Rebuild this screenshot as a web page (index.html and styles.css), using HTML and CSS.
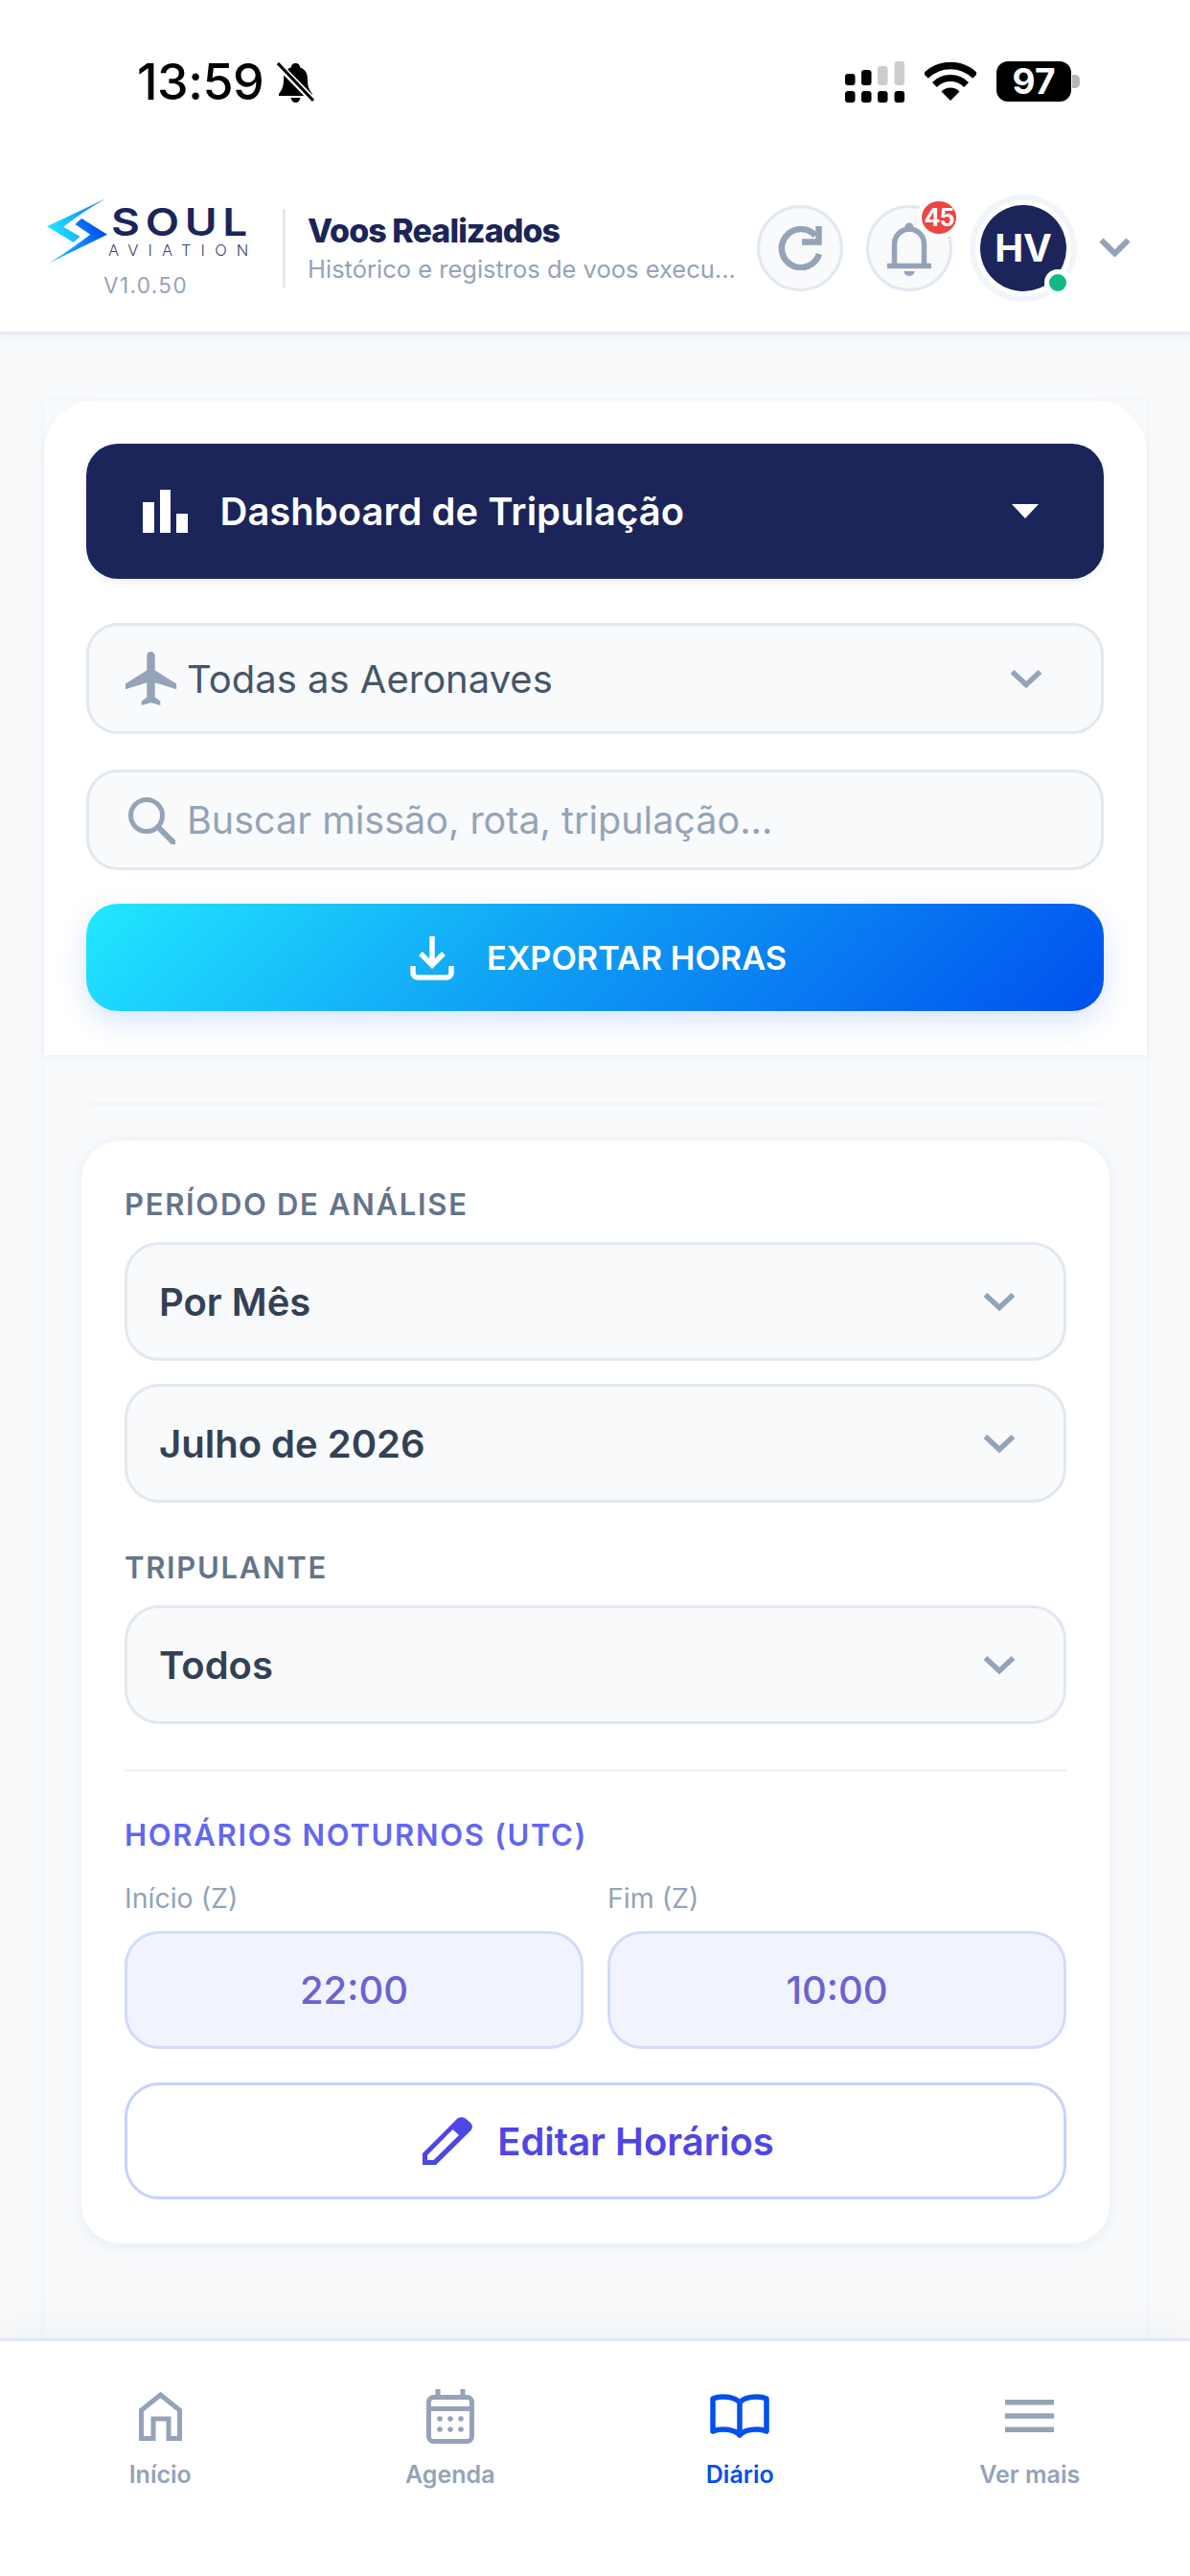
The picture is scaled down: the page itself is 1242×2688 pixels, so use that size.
FILE: index.html
```html
<!DOCTYPE html>
<html lang="pt-BR">
<head>
<meta charset="utf-8">
<title>Voos Realizados</title>
<link rel="stylesheet" href="styles.css">
</head>
<body>
<div class="page">
  <header class="header">
    <div class="status">
      <div class="status-left">
        <span class="time">13:59</span>
        <svg class="mute" viewBox="0 0 39 42"><path d="M19.5 1c3 0 4.500 2 4.800 4.500C30 7.500 32 12 32 18c0 8 2 11 5 15v2H2v-2c3-4 5-7 5-15 0-6 2-10.500 7.700-12.500C15 3 16.500 1 19.500 1zM14.500 37h10c-.5 3-2.500 5-5 5s-4.500-2-5-5z" fill="#000"/><path d="M1 2l37 38" stroke="#fff" stroke-width="7"/><path d="M1 1l37 39" stroke="#000" stroke-width="3"/></svg>
      </div>
      <div class="status-right">
        <svg class="signal" viewBox="0 0 62 43"><g fill="#000"><rect x="0" y="13" width="10.500" height="12" rx="3"/><rect x="17" y="9" width="10.500" height="16" rx="3"/><rect x="0" y="31" width="10.500" height="12" rx="3"/><rect x="17" y="31" width="10.500" height="12" rx="3"/><rect x="34" y="31" width="10.500" height="12" rx="3"/><rect x="51.500" y="31" width="10.500" height="12" rx="3"/></g><g fill="#ccc"><rect x="34" y="5" width="10.500" height="20" rx="3"/><rect x="51.500" y="0" width="10.500" height="25" rx="3"/></g></svg>
        <svg class="wifi" viewBox="0 0 54 40"><path d="M1.200 14.200a36.500 36.500 0 0 1 51.600 0" fill="none" stroke="#000" stroke-width="7.500"/><path d="M10.400 23.400a23.500 23.500 0 0 1 33.200 0" fill="none" stroke="#000" stroke-width="7"/><path d="M27 40L17.500 30.500a13.500 13.500 0 0 1 19 0z" fill="#000"/></svg>
        <div class="battery"><span class="battery-body">97</span><span class="battery-nub"></span></div>
      </div>
    </div>
    <div class="topbar">
      <div class="brand">
        <div class="logo">
          <svg class="logo-mark" viewBox="57 60 188 202">
            <defs>
              <linearGradient id="lg1" x1="0" y1="0.6" x2="1" y2="0.3"><stop offset="0" stop-color="#1fe6ff"/><stop offset="1" stop-color="#1478f0"/></linearGradient>
              <linearGradient id="lg2" x1="0" y1="1" x2="1" y2="0.4"><stop offset="0" stop-color="#1fd8ff"/><stop offset="1" stop-color="#0050ee"/></linearGradient>
            </defs>
            <path d="M240 60L57 147l83 50 20-19-52-30q62-48 132-88z" fill="url(#lg1)"/>
            <path d="M245 172l-80-50-20 18 47 32q-62 48-130 90z" fill="url(#lg2)"/>
          </svg>
          <div class="logo-text">
            <span class="logo-soul">SOUL</span>
            <span class="logo-aviation">AVIATION</span>
          </div>
        </div>
        <span class="version">V1.0.50</span>
      </div>
      <div class="title-block">
        <h1 class="title">Voos Realizados</h1>
        <p class="subtitle">Histórico e registros de voos execu...</p>
      </div>
      <div class="actions">
        <button class="round">
          <svg class="ic-refresh" viewBox="0 0 46 46"><path d="M43 29A20 20 0 1 1 39 10" fill="none" stroke="#94a3b8" stroke-width="6.500"/><path d="M25 16.500H42.500V0" fill="none" stroke="#94a3b8" stroke-width="6.500"/></svg>
        </button>
        <button class="round bell">
          <svg class="ic-bell" viewBox="0 0 46 56"><circle cx="23" cy="5" r="4.500" fill="#94a3b8"/><path d="M7.500 46V23a15.500 16 0 0 1 31 0V46" fill="none" stroke="#94a3b8" stroke-width="5.500"/><path d="M0 45.500H46" stroke="#94a3b8" stroke-width="5.500"/><path d="M17.500 51h11a5.500 5 0 0 1-11 0z" fill="#94a3b8"/></svg>
          <span class="badge">45</span>
        </button>
        <div class="avatar">HV<span class="online"></span></div>
        <svg class="ic-caret" viewBox="0 0 33 20"><path d="M2.500 2.500L16.500 16.500 30.500 2.500" fill="none" stroke="#94a3b8" stroke-width="6"/></svg>
      </div>
    </div>
  </header>

  <main class="main">
    <div class="panel">
      <section class="filters">
        <button class="dash">
          <span class="dash-bars"><i class="bar bar-a"></i><i class="bar bar-b"></i><i class="bar bar-c"></i></span>
          <span class="dash-label">Dashboard de Tripulação</span>
          <svg class="dash-arrow" viewBox="0 0 28 15"><path d="M0 0H28L14 15z" fill="#fff"/></svg>
        </button>
        <div class="control aircraft">
          <svg class="ic-plane" viewBox="2 2 19 20"><path d="M21 16v-2l-8-5V3.500c0-.83-.67-1.500-1.500-1.500S10 2.670 10 3.500V9l-8 5v2l8-2.500V19l-2 1.500V22l3.500-1 3.500 1v-1.500L13 19v-5.500l8 2.500z" fill="#94a3b8"/></svg>
          <span class="control-text">Todas as Aeronaves</span>
          <svg class="chev" viewBox="0 0 34 21"><path d="M2.500 3L17 16.500 31.500 3" fill="none" stroke="#94a3b8" stroke-width="5.500"/></svg>
        </div>
        <div class="control search">
          <svg class="ic-search" viewBox="0 0 50 50"><circle cx="20" cy="20" r="16.500" fill="none" stroke="#94a3b8" stroke-width="5"/><path d="M32 32L48 48" stroke="#94a3b8" stroke-width="6" stroke-linecap="round"/></svg>
          <span class="placeholder">Buscar missão, rota, tripulação...</span>
        </div>
        <button class="export">
          <svg class="ic-download" viewBox="0 0 46 48"><path d="M23 2V31M11 20L23 32 35 20" fill="none" stroke="#fff" stroke-width="5.500"/><path d="M3 33V40a5 5 0 0 0 5 5H38a5 5 0 0 0 5-5V33" fill="none" stroke="#fff" stroke-width="5.500"/></svg>
          <span>EXPORTAR HORAS</span>
        </button>
      </section>

      <div class="rule"></div>

      <section class="card">
        <div class="label">PERÍODO DE ANÁLISE</div>
        <div class="select"><span>Por Mês</span><svg class="chev" viewBox="0 0 34 21"><path d="M2.500 3L17 16.500 31.500 3" fill="none" stroke="#94a3b8" stroke-width="5.500"/></svg></div>
        <div class="select next"><span>Julho de 2026</span><svg class="chev" viewBox="0 0 34 21"><path d="M2.500 3L17 16.500 31.500 3" fill="none" stroke="#94a3b8" stroke-width="5.500"/></svg></div>
        <div class="label spaced">TRIPULANTE</div>
        <div class="select"><span>Todos</span><svg class="chev" viewBox="0 0 34 21"><path d="M2.500 3L17 16.500 31.500 3" fill="none" stroke="#94a3b8" stroke-width="5.500"/></svg></div>
        <div class="card-rule"></div>
        <div class="label night">HORÁRIOS NOTURNOS (UTC)</div>
        <div class="times">
          <div class="time-field"><div class="time-label">Início (Z)</div><div class="time-box">22:00</div></div>
          <div class="time-field"><div class="time-label">Fim (Z)</div><div class="time-box">10:00</div></div>
        </div>
        <button class="edit">
          <svg class="ic-pencil" viewBox="0 0 52 50"><path fill-rule="evenodd" d="M0 50V38L36 2c2-2 5-2.500 8-1l6 5c2.500 2.500 2.500 6 0 8.500L14 50zM5 45h6.500L38 19l-6.500-6L5 40z" fill="#4f46e5"/></svg>
          <span>Editar Horários</span>
        </button>
      </section>
    </div>
  </main>

  <nav class="nav">
    <a class="nav-item">
      <svg class="nv-home" viewBox="0 0 45 51"><path d="M2.500 51V19L22.500 3 42.500 19V48.500H31V28H15V48.500H2.500" fill="none" stroke="#94a3b8" stroke-width="5"/></svg>
      <span>Início</span>
    </a>
    <a class="nav-item">
      <svg class="nv-cal" viewBox="0 0 50 57"><path d="M12 0V9M38 0V9" stroke="#94a3b8" stroke-width="5"/><rect x="2.500" y="8.500" width="45" height="46" rx="5" fill="none" stroke="#94a3b8" stroke-width="5"/><path d="M2 20.500H48" stroke="#94a3b8" stroke-width="5"/><g fill="#94a3b8"><circle cx="14" cy="31" r="2.800"/><circle cx="25" cy="31" r="2.800"/><circle cx="36" cy="31" r="2.800"/><circle cx="14" cy="42" r="2.800"/><circle cx="25" cy="42" r="2.800"/><circle cx="36" cy="42" r="2.800"/></g></svg>
      <span>Agenda</span>
    </a>
    <a class="nav-item active">
      <svg class="nv-book" viewBox="0 0 62 46"><path d="M31 9C27 4 20 3 13 3 9 3 6 3.500 3 5V39C6 37.500 9 37 13 37 20 37 27 38 31 43 35 38 42 37 49 37 53 37 56 37.500 59 39V5C56 3.500 53 3 49 3 42 3 35 4 31 9zM31 9V43" fill="none" stroke="#0050ee" stroke-width="5.500" stroke-linejoin="round"/></svg>
      <span>Diário</span>
    </a>
    <a class="nav-item">
      <svg class="nv-menu" viewBox="0 0 51 34"><path d="M0 2.750H51M0 17H51M0 31.250H51" stroke="#94a3b8" stroke-width="5.500"/></svg>
      <span>Ver mais</span>
    </a>
  </nav>
</div>
</body>
</html>
```
FILE: styles.css
```css
* { box-sizing: border-box; }
html, body { margin: 0; padding: 0; }
body { font-family: Inter, "Liberation Sans", sans-serif; background: #f8fafc; color: #334155; }
button { font: inherit; border: 0; padding: 0; }
h1, p { margin: 0; }
svg { display: block; flex: none; }

.page { width: 1242px; height: 2688px; display: flex; flex-direction: column; overflow: hidden; }

/* header */
.header { height: 349px; flex: none; background: #fff; border-bottom: 3px solid #e6ebf2; box-shadow: 0 3px 10px rgba(148,163,184,.1); position: relative; z-index: 2; }
.status { height: 202px; display: flex; justify-content: space-between; padding: 64px 115px 0 143px; }
.status-left { display: flex; align-items: flex-start; gap: 14px; }
.time { font-size: 52px; font-weight: 500; line-height: 44px; color: #000; letter-spacing: -0.5px; }
.mute { width: 39px; height: 42px; margin-top: 1px; }
.status-right { display: flex; align-items: flex-start; gap: 21px; }
.signal { width: 62px; height: 43px; }
.wifi { width: 54px; height: 40px; margin-top: 1px; }
.battery { display: flex; align-items: center; gap: 1px; }
.battery-body { width: 78px; height: 42px; border-radius: 12px; background: #000; color: #fff; font-size: 37px; font-weight: 700; line-height: 42px; text-align: center; }
.battery-nub { width: 8px; height: 14px; background: #b5b5b5; border-radius: 0 5px 5px 0; }

.topbar { display: flex; align-items: center; height: 113px; padding: 0 63px 0 49px; }
.brand { width: 206px; display: flex; flex-direction: column; align-items: center; gap: 11px; flex: none; }
.logo { display: flex; gap: 4px; align-items: center; width: 206px; }
.logo-mark { width: 63px; height: 68px; }
.logo-text { display: flex; flex-direction: column; align-items: flex-start; color: #1b2559; margin-top: 2px; width: 139px; white-space: nowrap; }
.logo-soul { font-size: 40px; font-weight: 600; letter-spacing: 5px; line-height: 38px; transform: scaleX(1.15); transform-origin: left center; }
.logo-aviation { font-size: 16.500px; font-weight: 300; letter-spacing: 10.200px; line-height: 20px; margin-left: -3px; color: #3c4670; }
.version { font-size: 22.500px; color: #94a3b8; font-weight: 400; letter-spacing: 1.400px; line-height: 24px; }
.title-block { width: 473px; flex: none; margin-left: 40px; padding-left: 23px; border-left: 3px solid #e2e8f0; height: 82px; display: flex; flex-direction: column; justify-content: center; gap: 4px; }
.title { font-size: 34px; font-weight: 800; color: #1b2559; letter-spacing: -0.93px; line-height: 40px; }
.subtitle { font-size: 25.500px; color: #94a3b8; line-height: 32px; white-space: nowrap; }
.actions { display: flex; align-items: center; margin-left: 22px; }
.round { width: 90px; height: 90px; border-radius: 50%; background: #f8fafc; border: 3px solid #e2e8f0; display: flex; align-items: center; justify-content: center; position: relative; }
.bell { margin-left: 24px; }
.ic-refresh { width: 46px; height: 46px; }
.ic-bell { width: 46px; height: 56px; margin-top: 2px; }
.badge { position: absolute; top: -7px; right: -7px; width: 36px; height: 34px; border-radius: 50%; background: #ef4444; color: #fff; font-size: 25px; font-weight: 700; line-height: 34px; text-align: center; letter-spacing: -1px; box-shadow: 0 0 0 5px #fff; }
.avatar { position: relative; width: 90px; height: 90px; margin-left: 29px; border-radius: 50%; background: #1b2559; color: #fff; font-size: 40px; font-weight: 700; line-height: 90px; text-align: center; box-shadow: 0 0 0 5px #fff, 0 0 0 11px #f1f5f9; }
.online { position: absolute; right: 0; bottom: 0; width: 18px; height: 18px; border-radius: 50%; background: #10b981; box-shadow: 0 0 0 5px #fff; }
.ic-caret { width: 33px; height: 20px; margin-left: 34px; margin-top: -2px; }

/* main */
.main { flex: 1; min-height: 0; padding: 69px 45px 0 46px; overflow: hidden; }
.panel { height: 100%; box-shadow: 0 0 6px rgba(148,163,184,.1); }

.filters { background: #fff; border-radius: 54px 54px 0 0; padding: 45px 45px 46px 44px; display: flex; flex-direction: column; box-shadow: 0 3px 6px rgba(148,163,184,.1); }
.dash { height: 141px; border-radius: 33px; background: #1b2559; color: #fff; display: flex; align-items: center; padding: 0 68px 0 59px; box-shadow: 0 3px 8px rgba(27,37,89,.08); }
.dash-bars { display: flex; align-items: flex-end; gap: 6px; height: 45px; }
.bar { width: 11.500px; background: #fff; display: block; }
.bar-a { height: 32px; }
.bar-b { height: 45px; }
.bar-c { height: 20px; }
.dash-label { flex: 1; margin-left: 34px; text-align: left; font-size: 40px; font-weight: 600; }
.dash-arrow { width: 28px; height: 15px; }

.control { display: flex; align-items: center; background: #f8fafc; border: 3px solid #e2e8f0; border-radius: 33px; }
.aircraft { height: 116px; margin-top: 46px; padding: 0 61px 0 36px; }
.ic-plane { width: 57px; height: 56px; }
.control-text { flex: 1; margin-left: 9px; font-size: 40px; color: #475569; }
.chev { width: 34px; height: 21px; }
.search { height: 105px; margin-top: 37px; padding: 0 0 0 40px; }
.ic-search { width: 50px; height: 50px; }
.placeholder { margin-left: 12px; font-size: 39.500px; color: #94a3b8; }
.export { height: 112px; margin-top: 35px; padding-left: 7px; border-radius: 33px; background: linear-gradient(135deg, #22e8ff 0%, #0fa0f5 45%, #0050ee 100%); color: #fff; display: flex; align-items: center; justify-content: center; gap: 34px; font-size: 34.300px; font-weight: 600; box-shadow: 0 10px 30px rgba(0,80,238,.16); }
.ic-download { width: 46px; height: 48px; }

.rule { height: 2px; margin: 50px 47px 0; background: #f1f5f9; }

.card { margin: 36px 38px 0; background: #fff; border-radius: 42px; padding: 49px 45px 46px; box-shadow: 0 3px 14px rgba(148,163,184,.14); border: 1px solid #f1f5f9; }
.label { font-size: 31px; font-weight: 600; color: #64748b; letter-spacing: 1.700px; line-height: 36px; }
.spaced { margin-top: 50px; }
.select { height: 124px; margin-top: 21px; display: flex; align-items: center; justify-content: space-between; padding: 0 50px 0 33px; background: #f8fafc; border: 3px solid #e2e8f0; border-radius: 36px; font-size: 40px; font-weight: 600; color: #334155; }
.select.next { margin-top: 24px; }
.card-rule { height: 3px; margin-top: 47px; background: #f1f5f9; }
.night { color: #6366f1; margin-top: 48px; }
.times { display: grid; grid-template-columns: 1fr 1fr; gap: 25px; margin-top: 32px; }
.time-label { font-size: 28.500px; line-height: 32px; color: #94a3b8; margin-bottom: 18px; }
.time-box { height: 123px; background: #f1f4fe; border: 3px solid #d2dbfb; border-radius: 36px; display: flex; align-items: center; justify-content: center; font-size: 40px; font-weight: 500; color: #6a63cf; }
.edit { width: 100%; height: 122px; margin-top: 35px; padding-left: 6px; background: #fff; border: 3px solid #c7d2fe; border-radius: 36px; display: flex; align-items: center; justify-content: center; gap: 26px; color: #4f46e5; font-size: 40px; font-weight: 600; }
.ic-pencil { width: 52px; height: 50px; }

/* nav */
.nav { height: 248px; flex: none; background: #fff; border-top: 3px solid #e2e8f0; box-shadow: 0 -12px 40px rgba(30,41,59,.04); display: flex; padding: 0 16px; position: relative; }
.nav-item { flex: 1; display: flex; flex-direction: column; align-items: center; padding-top: 50px; font-size: 25px; font-weight: 600; color: #94a3b8; }
.nav-item svg { margin-bottom: 17px; }
.nav-item span { line-height: 30px; }
.nav-item.active { color: #0050ee; }
.nv-home { width: 45px; height: 51px; margin-top: 3px; margin-bottom: 20px !important; }
.nv-cal { width: 50px; height: 57px; }
.nv-book { width: 62px; height: 46px; margin-top: 5px; margin-bottom: 23px !important; }
.nv-menu { width: 51px; height: 34px; margin-top: 11px; margin-bottom: 29px !important; }
```
